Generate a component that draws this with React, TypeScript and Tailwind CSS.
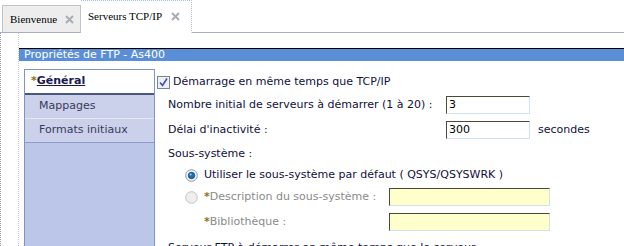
import { ReactNode } from 'react'

function CloseX() {
  return (
    <svg width="9" height="9" viewBox="0 0 9 9" className="shrink-0">
      <path d="M1 1 L8 8 M8 1 L1 8" stroke="#a8acb4" strokeWidth="2" />
    </svg>
  )
}

function Star() {
  return <span className="text-[#8a7420] font-bold">*</span>
}

function Radio({ checked, disabled }: { checked?: boolean; disabled?: boolean }) {
  return (
    <svg width="13" height="13" viewBox="0 0 13 13" className="shrink-0">
      <circle cx="6.5" cy="6.5" r="5.8" fill={disabled ? '#eeeeee' : '#f4f4f4'} stroke={disabled ? '#c4c4c4' : '#8c98a8'} />
      {checked && <circle cx="6.5" cy="6.5" r="3.2" fill="#1f6fb8" stroke="#0a3f78" strokeWidth="0.8" />}
      {checked && <circle cx="5.6" cy="5.6" r="1" fill="#8fd0ff" />}
    </svg>
  )
}

function Field({ value, yellow, className }: { value?: string; yellow?: boolean; className: string }) {
  return (
    <div
      className={`h-[18px] border-t border-l border-[#4a4a3a] border-r border-b border-r-[#cfe0ef] border-b-[#cfe0ef] px-[2px] text-[11px] leading-[16px] text-black ${yellow ? 'bg-[#ffffcc]' : 'bg-white'} ${className}`}
    >
      {value}
    </div>
  )
}

function Row({ children, className = '' }: { children: ReactNode; className?: string }) {
  return <div className={`flex items-center ${className}`}>{children}</div>
}

export default function App() {
  return (
    <div className="w-[624px] h-[246px] overflow-hidden bg-white text-[#10103a] font-['DejaVu_Sans',Verdana,sans-serif] text-[11px]">
      {/* tab strip */}
      <div className="h-[33px] flex items-end border-b border-[#a6acc8] font-['Liberation_Serif',serif] text-[11px] text-black">
        <div className="w-[2px]" />
        <div className="h-[28px] w-[79px] mb-[-1px] flex items-center justify-between pl-[7px] pr-[6px] bg-[#ededed] border border-[#c4c4c8] border-b-[#a6acc8]">
          <span>Bienvenue</span>
          <CloseX />
        </div>
        <div className="h-[33px] w-[111px] mb-[-1px] flex items-center justify-between pl-[7px] pr-[11px] bg-white border-t border-dotted border-t-[#9cc0ee] border-r border-r-[#b4b8c4] border-b border-b-white">
          <span>Serveurs TCP/IP</span>
          <CloseX />
        </div>
      </div>

      {/* body */}
      <div className="flex h-[213px]">
        <div className="w-[18px] shrink-0 border-l border-dotted border-[#9a9aa8]" />
        <div className="flex-1 flex flex-col pt-[15px] border-l border-dotted border-[#c8c8d4]">
          <div className="h-[13px] border-t border-black bg-[#5a8fd8] text-white text-[11px] leading-[12px] pl-[5px]">
            Propriétés de FTP - As400
          </div>
          <div className="flex flex-1 pt-[8px] pl-[5px]">
            {/* sidebar */}
            <div className="w-[131px] shrink-0 flex flex-col border-l border-t border-r border-[#8294c4] bg-[#c7cdea]">
              <div className="h-[25px] bg-white border-b-2 border-[#4a5880] flex items-center pl-[6px] font-bold text-[#1a1a50]">
                <Star />
                <span className="underline">Général</span>
              </div>
              <div className="h-[24px] border-b border-[#e6e8f4] flex items-center pl-[14px] text-[#3a3a5a] bg-[#cbd1ea]">Mappages</div>
              <div className="h-[24px] border-b border-[#8c9cc8] flex items-center pl-[14px] text-[#3a3a5a] bg-[#cbd1ea]">Formats initiaux</div>
              <div className="flex-1 bg-[#bcc6e8]" />
            </div>

            {/* content */}
            <div className="flex-1 flex flex-col pl-[2px] pt-[6px]">
              <Row className="h-[14px]">
                <div className="w-[13px] h-[13px] mr-[3px] border border-[#7a8494] bg-[#eef0f4] flex items-center justify-center">
                  <svg width="9" height="9" viewBox="0 0 9 9">
                    <path d="M1 4.5 L3.5 7.5 L8 0.5" stroke="#3a50b8" strokeWidth="1.6" fill="none" />
                  </svg>
                </div>
                <span>Démarrage en même temps que TCP/IP</span>
              </Row>
              <Row className="h-[18px] mt-[7px] pl-[11px]">
                <span className="w-[278px]">Nombre initial de serveurs à démarrer (1 à 20) :</span>
                <Field value="3" className="w-[84px]" />
              </Row>
              <Row className="h-[18px] mt-[7px] pl-[11px]">
                <span className="w-[278px]">Délai d'inactivité :</span>
                <Field value="300" className="w-[84px]" />
                <span className="ml-[8px]">secondes</span>
              </Row>
              <Row className="h-[14px] mt-[8px] pl-[11px]">
                <span>Sous-système :</span>
              </Row>
              <Row className="h-[14px] mt-[7px] pl-[28px]">
                <Radio checked />
                <span className="ml-[6px]">Utiliser le sous-système par défaut ( QSYS/QSYSWRK )</span>
              </Row>
              <Row className="h-[18px] mt-[6px] pl-[28px]">
                <Radio disabled />
                <span className="ml-[6px] w-[185px] text-[#8a8a8a]">
                  <Star />Description du sous-système :
                </span>
                <Field yellow className="w-[161px]" />
              </Row>
              <Row className="h-[18px] mt-[7px] pl-[47px]">
                <span className="w-[185px] text-[#8a8a8a]">
                  <Star />Bibliothèque :
                </span>
                <Field yellow className="w-[161px]" />
              </Row>
              <Row className="h-[14px] mt-[10px] pl-[11px]">
                <span>Serveur FTP à démarrer en même temps que le serveur</span>
              </Row>
            </div>
          </div>
        </div>
      </div>
    </div>
  )
}
